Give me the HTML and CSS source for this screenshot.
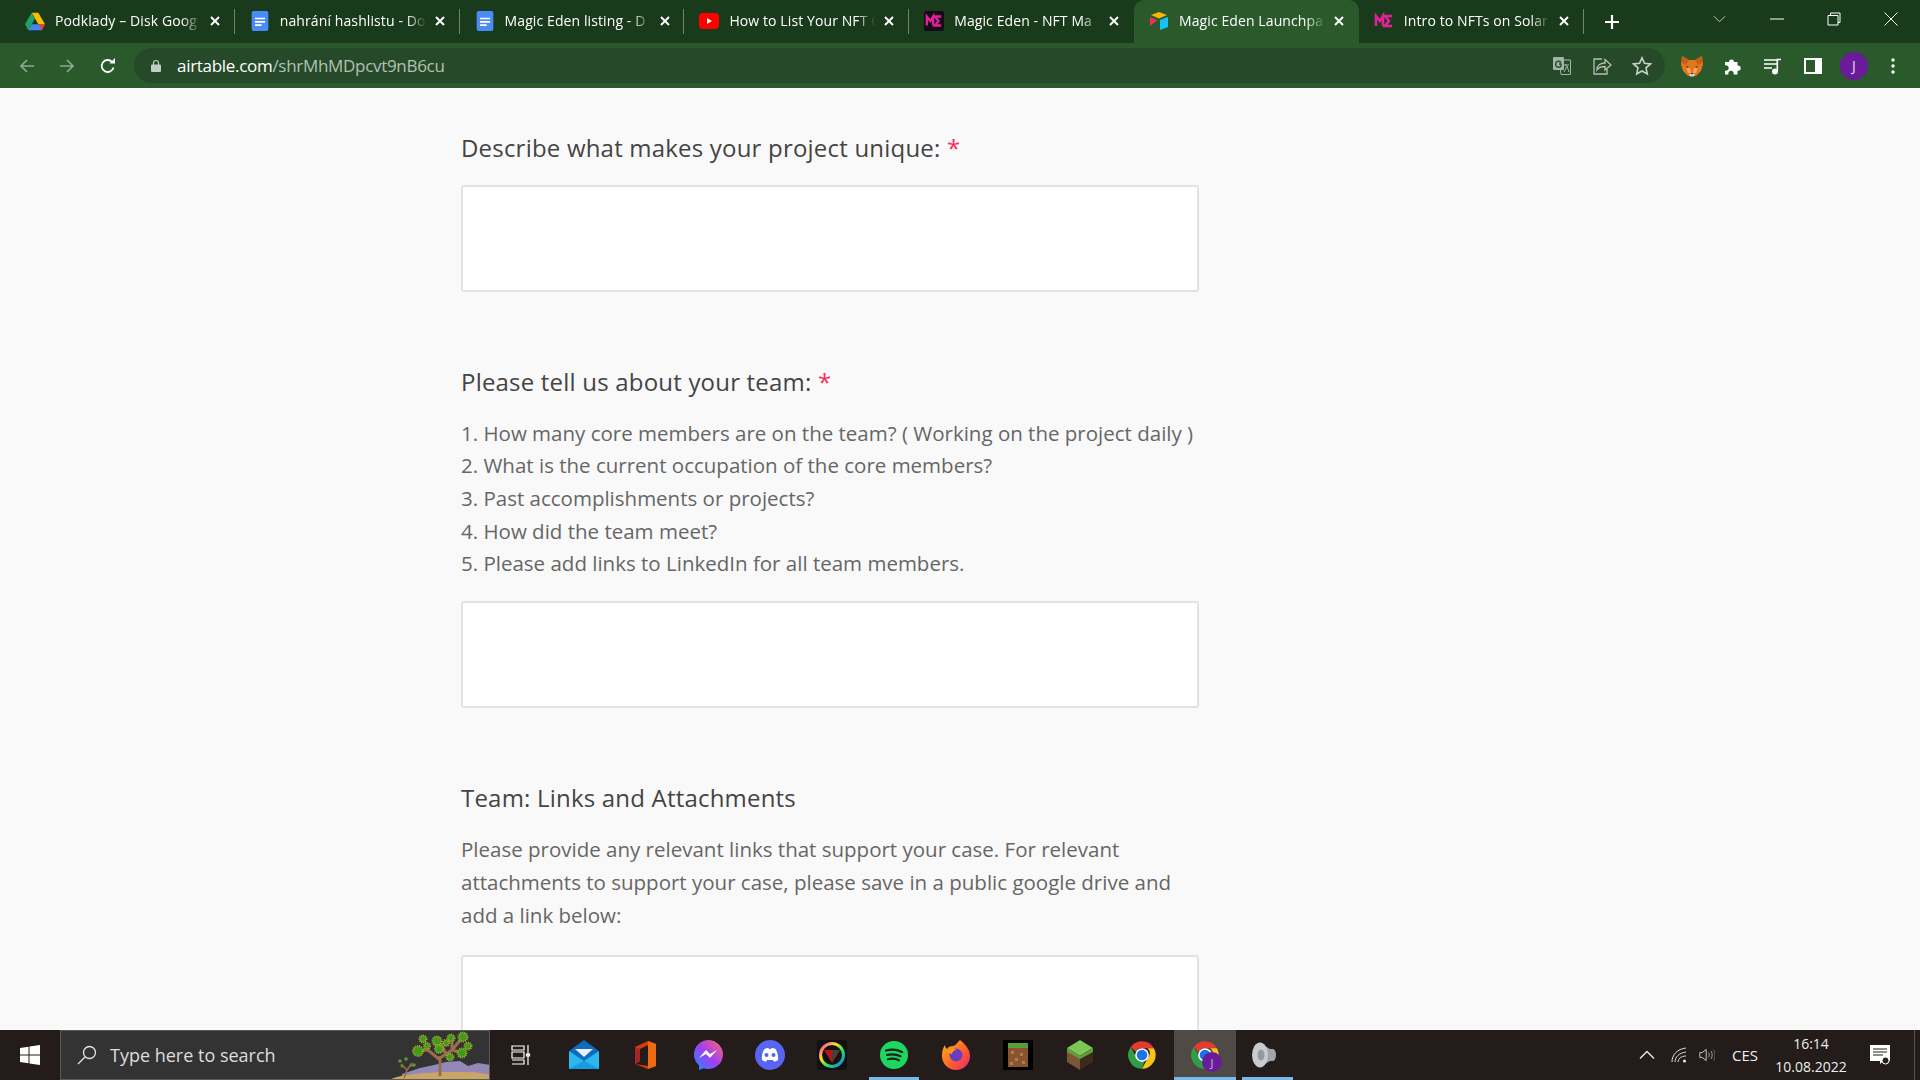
FILE: index.html

```html
<!DOCTYPE html>
<html lang="en">
<head>
    <meta charset="UTF-8">
    <title>Magic Eden Launchpad</title>
    <link rel="stylesheet" href="styles.css">
</head>
<body>
<svg class="defs" width="0" height="0">
    <symbol id="doc" viewBox="0 0 20 24">
        <rect width="20" height="24" rx="2.5" fill="#4b8bf5"/>
        <path d="M4 8h12v2H4zM4 12h12v2H4zM4 16h8v2H4z" fill="#fff"/>
    </symbol>
    <symbol id="me" viewBox="0 0 20 20">
        <path d="M2 15V5l4 5 3-5v10M18 5h-7l4 5-4 5h7" fill="none" stroke="#e0219a" stroke-width="2.6"/>
    </symbol>
    <symbol id="close" viewBox="0 0 10 10">
        <path d="M1 1l8 8M9 1l-8 8" stroke="#fff" stroke-width="1.9"/>
    </symbol>
    <symbol id="chrome" viewBox="0 0 48 48">
        <path d="M24 2a22 22 0 0 1 19 11H24a11 11 0 0 0-10 6L6 11A22 22 0 0 1 24 2z" fill="#e33b2e"/>
        <path d="M43 13a22 22 0 0 1-19 33l9-17a11 11 0 0 0 0-16z" fill="#fbc116"/>
        <path d="M24 46A22 22 0 0 1 6 11l9 16a11 11 0 0 0 13 7z" fill="#2f9e46"/>
        <circle cx="24" cy="24" r="11" fill="#fff"/>
        <circle cx="24" cy="24" r="8.5" fill="#1a73e8"/>
    </symbol>
</svg>

<div class="tabstrip">
    <div class="tab">
        <svg class="favicon" viewBox="0 0 24 22"><path d="M8 1h8l8 14h-8z" fill="#fbbc04"/><path d="M8 1l4 7-8 14-4-7z" fill="#1ea362"/><path d="M4 22l4-7h16l-4 7z" fill="#4285f4"/><path d="M16 15l4 7 4-7z" fill="#ea4335"/></svg>
        <span class="tab-title">Podklady – Disk Goog</span>
        <svg class="tab-close"><use href="#close"/></svg>
    </div>
    <div class="tab">
        <svg class="favicon"><use href="#doc"/></svg>
        <span class="tab-title">nahrání hashlistu - Do</span>
        <svg class="tab-close"><use href="#close"/></svg>
    </div>
    <div class="tab">
        <svg class="favicon"><use href="#doc"/></svg>
        <span class="tab-title">Magic Eden listing - D</span>
        <svg class="tab-close"><use href="#close"/></svg>
    </div>
    <div class="tab">
        <svg class="favicon" viewBox="0 0 20 20"><rect y="2" width="20" height="16" rx="4" fill="#f00"/><path d="M8 7l5 3-5 3z" fill="#fff"/></svg>
        <span class="tab-title">How to List Your NFT C</span>
        <svg class="tab-close"><use href="#close"/></svg>
    </div>
    <div class="tab no-sep">
        <span class="me-box"><svg><use href="#me"/></svg></span>
        <span class="tab-title">Magic Eden - NFT Ma</span>
        <svg class="tab-close"><use href="#close"/></svg>
    </div>
    <div class="tab active">
        <svg class="favicon" viewBox="0 0 20 20"><path d="M10 1l8 3-8 3.4L2 4z" fill="#fcb400"/><path d="M11 9l8-3v10l-8 3z" fill="#18bfff"/><path d="M1 6l7 3.6L1 15z" fill="#f82b60"/></svg>
        <span class="tab-title">Magic Eden Launchpa</span>
        <svg class="tab-close"><use href="#close"/></svg>
    </div>
    <div class="tab">
        <svg class="favicon"><use href="#me"/></svg>
        <span class="tab-title">Intro to NFTs on Solar</span>
        <svg class="tab-close"><use href="#close"/></svg>
    </div>
    <svg class="new-tab" viewBox="0 0 16 16"><path d="M8 1v14M1 8h14" stroke="#fff" stroke-width="2.2"/></svg>
    <div class="win-controls">
        <svg class="win-chevron" viewBox="0 0 14 8"><path d="M1 1l6 6 6-6" fill="none" stroke="#c6d2c6" stroke-width="1"/></svg>
        <svg class="win-btn" viewBox="0 0 14 14"><path d="M0 7h14" stroke="#fff" stroke-width="1"/></svg>
        <svg class="win-btn" viewBox="0 0 14 14"><path d="M3.5 3V1H13v9.5H11M1 3.5h10V13H1z" fill="none" stroke="#fff" stroke-width="1"/></svg>
        <svg class="win-btn" viewBox="0 0 14 14"><path d="M.5.5l13 13M13.5.5l-13 13" stroke="#fff" stroke-width="1"/></svg>
    </div>
</div>

<div class="toolbar">
    <svg class="nav-icon" viewBox="0 0 16 16"><path d="M15 8H2M8 2L2 8l6 6" fill="none" stroke="#8fa890" stroke-width="1.7"/></svg>
    <svg class="nav-icon" viewBox="0 0 16 16"><path d="M1 8h13M8 2l6 6-6 6" fill="none" stroke="#8fa890" stroke-width="1.7"/></svg>
    <svg class="nav-icon" viewBox="0 0 16 16"><path d="M13.5 9.5A6 6 0 1 1 12 3.8" fill="none" stroke="#fff" stroke-width="1.8"/><path d="M9.5 5.5H15V0z" fill="#fff"/></svg>
    <div class="omnibox">
        <svg class="lock" viewBox="0 0 10 13"><path d="M2.5 6V4a2.5 2.5 0 0 1 5 0v2" fill="none" stroke="#c2cdc2" stroke-width="1.2"/><rect y="5.5" width="10" height="7.5" rx="1" fill="#c2cdc2"/></svg>
        <span class="url">airtable.com<span class="url-path">/shrMhMDpcvt9nB6cu</span></span>
        <div class="omni-actions">
            <svg class="omni-icon" viewBox="0 0 20 20"><path d="M7 4h11.5v14.500H9z" fill="none" stroke="#a6b4a6" stroke-width="1"/><rect x="1" y="1" width="11" height="13" rx="1" fill="#a6b4a6"/><path d="M9 6.5A3 3 0 1 0 9 10V8H7" fill="none" stroke="#264a29" stroke-width="1.4"/><path d="M11 9h6M14 8v1.5M12 16l3-6 2 6" fill="none" stroke="#a6b4a6" stroke-width="1"/></svg>
            <svg class="omni-icon" viewBox="0 0 20 20"><path d="M10 3H2v15h13v-5" fill="none" stroke="#b4c0b4" stroke-width="1.3"/><path d="M5 14c0-5 4-7 8-7V3.5l6 5.500-6 5v-3.500c-3 0-6 .5-8 3.500z" fill="none" stroke="#b4c0b4" stroke-width="1.3"/></svg>
            <svg class="omni-icon" viewBox="0 0 20 20"><path d="M10 1.8l2.5 5.500 6 .6-4.500 4 1.300 6L10 15l-5.300 2.900 1.300-6-4.500-4 6-.6z" fill="none" stroke="#c8d2c8" stroke-width="1.6"/></svg>
        </div>
    </div>
    <div class="ext-icons">
        <svg class="ext-icon" viewBox="0 0 24 24"><path d="M2 2l7 4h6l7-4 1 8-2 7-5 5H8l-5-5-2-7z" fill="#e2761b"/><path d="M2 2l7 4-3 5-4-2zM22 2l-7 4 3 5 4-2z" fill="#c85f14"/><path d="M6 13l4 1 1 5H8zM18 13l-4 1-1 5h3z" fill="#f6a56a"/><path d="M6 12l3 1-2 1zM18 12l-3 1 2 1z" fill="#2c2018"/><path d="M9 20h6l-1 2.5h-4z" fill="#d9cfc5"/><path d="M11 19h2l-1 1.5z" fill="#2c2018"/></svg>
        <svg class="ext-icon" viewBox="0 0 20 20"><path d="M2 6h4a2.5 2.5 0 1 1 5 0h3.5v3.500a2.700 2.700 0 1 1 0 5.300V18.500H10.500a2.700 2.700 0 1 0-5 0H2v-4a2.700 2.700 0 1 0 0-5z" fill="#fff"/></svg>
        <svg class="ext-icon" viewBox="0 0 20 20"><path d="M1 4h13M1 8h13M1 12h8" stroke="#fff" stroke-width="1.6"/><circle cx="12" cy="15.5" r="3" fill="#fff"/><path d="M14.3 15.5V3.5H18" fill="none" stroke="#fff" stroke-width="1.6"/></svg>
        <svg class="ext-icon" viewBox="0 0 20 20"><path d="M1 2h18v16H1z" fill="#fff"/><path d="M3 4h9v12H3z" fill="#2a5a2c"/></svg>
        <span class="avatar">J</span>
        <svg class="ext-icon menu-dots" viewBox="0 0 4 16"><circle cx="2" cy="2" r="1.7" fill="#fff"/><circle cx="2" cy="8" r="1.7" fill="#fff"/><circle cx="2" cy="14" r="1.7" fill="#fff"/></svg>
    </div>
</div>

<main class="page">
    <div class="form">
        <div class="field first">
            <div class="field-label">Describe what makes your project unique: <span class="req">*</span></div>
            <div class="input-box"></div>
        </div>
        <div class="field">
            <div class="field-label">Please tell us about your team: <span class="req">*</span></div>
            <ol class="hint-list">
                <li>1. How many core members are on the team? ( Working on the project daily )</li>
                <li>2. What is the current occupation of the core members?</li>
                <li>3. Past accomplishments or projects?</li>
                <li>4. How did the team meet?</li>
                <li>5. Please add links to LinkedIn for all team members.</li>
            </ol>
            <div class="input-box"></div>
        </div>
        <div class="field">
            <div class="field-label">Team: Links and Attachments</div>
            <p class="hint">Please provide any relevant links that support your case. For relevant attachments to support your case, please save in a public google drive and add a link below:</p>
            <div class="input-box"></div>
        </div>
    </div>
</main>

<footer class="taskbar">
    <div class="start">
        <svg viewBox="0 0 20 20" width="20" height="20"><path d="M0 3l8.5-1.200v7.700H0zM9.500 1.600L20 0v9.500H9.500zM0 10.500h8.500v7.700L0 17zM9.500 10.500H20V20L9.500 18.400z" fill="#fff"/></svg>
    </div>
    <div class="search">
        <svg class="search-icon" viewBox="0 0 20 20"><circle cx="12.5" cy="7.5" r="6" fill="none" stroke="#e4e4e4" stroke-width="1.3"/><path d="M8 12l-7 7" stroke="#e4e4e4" stroke-width="1.3"/></svg>
        <span class="search-text">Type here to search</span>
        <svg class="search-art" viewBox="0 0 100 50">
            <path d="M12 44l18-6 14-3 12-3 14-1 8 5 10-3 12 2v15H12z" fill="#9388b8"/>
            <path d="M0 50c4-5 40-8 60-8s30 0 40 3v5z" fill="#c9a566"/>
            <path d="M50 46V26M50 30L38 20 28 21M38 20l-1-6M50 28l12-8 10-12M62 20l10 3M56 24l-4-8-5-5M62 20V9" fill="none" stroke="#9a6e4c" stroke-width="3"/>
            <path d="M14 48l3-8 5-7M17 40l-6-6M20 36l5-1" fill="none" stroke="#9a6e4c" stroke-width="1.5"/>
            <g fill="#3f9a1f" stroke="#a8b02a" stroke-width="2" stroke-dasharray="1 1">
                <circle cx="33" cy="9" r="3.5"/><circle cx="47" cy="11" r="4.5"/><circle cx="61" cy="8" r="3.5"/><circle cx="73" cy="7" r="4.5"/><circle cx="78" cy="16" r="3.5"/><circle cx="56" cy="13" r="3"/><circle cx="37" cy="16" r="3"/><circle cx="28" cy="21" r="5"/><circle cx="49" cy="19" r="4"/><circle cx="72" cy="23" r="4.5"/><circle cx="60" cy="27" r="3.5"/>
            </g>
            <g fill="#5c9a2e">
                <circle cx="10" cy="31" r="1.8"/><circle cx="16" cy="29" r="1.8"/><circle cx="24" cy="35" r="1.8"/><circle cx="12" cy="36" r="1.5"/>
            </g>
        </svg>
    </div>
    <div class="apps">
        <div class="app task-view"><svg class="app-icon" viewBox="0 0 22 20"><path d="M1 1h12v4H1zM1 15h12v4H1M1 7h12v6H1zM17 0v20M15.5 9h3v2h-3z" fill="none" stroke="#fff" stroke-width="1.2"/></svg></div>
        <div class="app"><svg class="app-icon" viewBox="0 0 30 30"><path d="M0 11L15 0l15 11v18H0z" fill="#0f6cbd"/><path d="M6 9h18l-9 8z" fill="#e8eef5"/><path d="M0 11l15 10 15-10v18H0z" fill="#2bb7f0"/><path d="M0 29l15-8 15 8z" fill="#1a9ae0"/></svg></div>
        <div class="app"><svg class="app-icon" viewBox="0 0 30 30"><path d="M4 7l13-6 8 3v22l-8 3L4 24l13 2V5L9 9v12l-5 3z" fill="#d83b01"/><path d="M17 1l8 3v22l-8 3z" fill="#eb6a12"/><path d="M4 7l5 2v12l-5 3z" fill="#a4262c"/></svg></div>
        <div class="app"><svg class="app-icon" viewBox="0 0 30 30"><defs><linearGradient id="msgr" x1="0" y1="1" x2="1" y2="0"><stop offset="0" stop-color="#1f8cff"/><stop offset=".5" stop-color="#a33df5"/><stop offset="1" stop-color="#ff6a6a"/></linearGradient></defs><path d="M15 0a15 14.5 0 0 1 0 29c-2 0-3-.3-4-.7L6 30v-4.5A14.5 14.5 0 0 1 15 0z" fill="url(#msgr)"/><path d="M6 18l7-8 4 4 7-4-7 8-4-4z" fill="#fff"/></svg></div>
        <div class="app"><svg class="app-icon" viewBox="0 0 30 30"><circle cx="15" cy="15" r="15" fill="#5865f2"/><path d="M7 20c-.5-4 .5-8 2.500-11 1.500-.7 3-1 4-1l.5 1h2l.5-1c1 0 2.500.3 4 1 2 3 3 7 2.500 11-1.500 1-3 1.500-4 1.700l-1-1.700H12l-1 1.700c-1-.2-2.500-.7-4-1.700z" fill="#fff"/><circle cx="11.5" cy="15" r="2" fill="#5865f2"/><circle cx="18.5" cy="15" r="2" fill="#5865f2"/></svg></div>
        <div class="app"><svg class="app-icon" viewBox="0 0 30 30"><defs><linearGradient id="rgb" x1="0" y1="0" x2="1" y2="1"><stop offset="0" stop-color="#ff2bd0"/><stop offset=".35" stop-color="#ffe014"/><stop offset=".65" stop-color="#18e06a"/><stop offset="1" stop-color="#2a6bff"/></linearGradient></defs><rect width="30" height="30" rx="3" fill="#111"/><circle cx="15" cy="15" r="11.5" fill="none" stroke="url(#rgb)" stroke-width="3"/><path d="M7 10h16l-8 13z" fill="#b3161c"/><path d="M15 10h8l-8 13z" fill="#4d3a3a"/></svg></div>
        <div class="app has-bar"><svg class="app-icon" viewBox="0 0 30 30"><circle cx="15" cy="15" r="14" fill="#1ed760"/><path d="M7 10.5c6-1.500 11-1 16 1.500M8 15c5-1.200 9-.8 13.500 1.300M9 19.300c4-1 8-.6 11 1" fill="none" stroke="#16241a" stroke-width="2.2" stroke-linecap="round"/></svg></div>
        <div class="app"><svg class="app-icon" viewBox="0 0 30 30"><defs><linearGradient id="ff" x1="0" y1="0" x2="1" y2="1"><stop offset="0" stop-color="#ffb81a"/><stop offset=".6" stop-color="#ff5a2a"/><stop offset="1" stop-color="#e0218a"/></linearGradient></defs><path d="M19 0c5 4 10 9 10 16a14 14 0 0 1-28 0C1 11 2 8 4 5c0 2 1 3 2 4 1-2 3-3 6-3 2 0 4-3 7-6z" fill="url(#ff)"/><circle cx="15" cy="15" r="6.5" fill="#6b3bc0"/><path d="M5 12c3-3 8-4 11-2-3 0-5 2-5 4z" fill="#ff9a1a"/></svg></div>
        <div class="app"><span class="mc-box"><svg viewBox="0 0 20 24" width="20" height="24"><rect width="20" height="24" fill="#8a5330"/><rect width="20" height="5" fill="#5a9c3a"/><path d="M3 8h3v3H3zM12 10h3v3h-3zM7 15h3v3H7zM14 18h3v3h-3zM2 19h3v3H2z" fill="#b17a4c"/></svg></span></div>
        <div class="app"><svg class="app-icon" viewBox="0 0 30 30"><path d="M15 0l13 8-13 8L2 8z" fill="#7dc855"/><path d="M2 8l13 8v14L2 22z" fill="#7a5638"/><path d="M28 8L15 16v14l13-8z" fill="#3c2a1c"/><path d="M2 8l13 8v3L2 12zM28 8l-13 8v3l13-7z" fill="#5f9e3c"/></svg></div>
        <div class="app"><svg class="chrome-big"><use href="#chrome"/></svg></div>
        <div class="app active has-bar">
            <svg class="chrome-big"><use href="#chrome"/></svg>
            <span class="chrome-badge">J</span>
        </div>
        <div class="app has-bar narrow"><svg class="app-icon" viewBox="0 0 30 30"><path d="M10 3L20 9h3a3 6 0 0 1 0 12h-3L10 27z" fill="#a2a6ac"/><ellipse cx="10" cy="15" rx="8" ry="12.5" fill="#c8cbd0"/><ellipse cx="11" cy="15" rx="3.5" ry="5.5" fill="#96999f"/></svg></div>
    </div>
    <div class="tray">
        <svg class="tray-icon caret" viewBox="0 0 16 10"><path d="M1 8.5l7-7 7 7" fill="none" stroke="#eee" stroke-width="1.3"/></svg>
        <svg class="tray-icon wifi" viewBox="0 0 16 16"><path d="M1 15C1 8 6 2 15 1M4 15c0-5 4-9 11-10M7 15c0-3 3-6 8-6" fill="none" stroke="#ddd" stroke-width="1"/><circle cx="13.5" cy="14" r="1.5" fill="#eee"/></svg>
        <svg class="tray-icon" viewBox="0 0 20 18"><path d="M1 6h3l5-4v14l-5-4H1z" fill="none" stroke="#eee" stroke-width="1"/><path d="M12 6c1 2 1 4 0 6M15 4c2 3 2 7 0 10" fill="none" stroke="#bbb" stroke-width="1"/><path d="M18 2c2.5 4 2.5 10 0 14" fill="none" stroke="#777" stroke-width="1"/></svg>
        <span class="lang">CES</span>
        <div class="clock">
            <div>16:14</div>
            <div>10.08.2022</div>
        </div>
        <svg class="notify" viewBox="0 0 20 20"><path d="M0 0h20v16h-7l-3 3v-3H0z" fill="#fff"/><path d="M3 4h14M3 7h14M3 10h10" stroke="#231c1a" stroke-width="1"/><circle cx="15.5" cy="15.5" r="3.5" fill="#231c1a" stroke="#fff"/></svg>
        <span class="show-desktop"></span>
    </div>
</footer>
</body>
</html>
```

FILE: styles.css

```css
* {
    box-sizing: border-box;
}

html, body {
    height: 100%;
}

body {
    margin: 0;
    display: flex;
    flex-direction: column;
    height: 1080px;
    overflow: hidden;
    font-family: "Open Sans", "Noto Sans", sans-serif;
    background-color: #f9f9f9;
}

.defs {
    position: absolute;
}

/* tabs */
.tabstrip {
    display: flex;
    align-items: center;
    height: 43px;
    padding-left: 10px;
    background-color: #1a3a1c;
    color: white;
}

.tab {
    position: relative;
    display: flex;
    align-items: center;
    flex: 0 0 224.8px;
    height: 43px;
    padding-left: 15px;
    padding-bottom: 2px;
    font-size: 14px;
    letter-spacing: 0.1px;
}

.tab::after {
    content: "";
    position: absolute;
    right: 0;
    top: 9px;
    width: 1px;
    height: 25px;
    background-color: #6f8570;
}

.tab.no-sep::after, .tab.active::after {
    display: none;
}

.tab.active {
    background-color: #2a5a2c;
    border-radius: 10px 10px 0 0;
}

.favicon {
    flex: 0 0 20px;
    width: 20px;
    height: 20px;
    margin-right: 10px;
}

.me-box {
    display: flex;
    align-items: center;
    justify-content: center;
    flex: 0 0 20px;
    width: 20px;
    height: 20px;
    margin-right: 10px;
    background-color: #140a18;
    border-radius: 2px;
}

.me-box svg {
    width: 18px;
    height: 18px;
}

.tab-title {
    flex: 0 0 151px;
    width: 151px;
    overflow: hidden;
    white-space: nowrap;
    -webkit-mask-image: linear-gradient(to right, black 84%, transparent 97%);
    mask-image: linear-gradient(to right, black 84%, transparent 97%);
}

.tab-close {
    width: 10px;
    height: 10px;
    margin-left: 4px;
}

.new-tab {
    width: 16px;
    height: 16px;
    margin-left: 20px;
}

.win-controls {
    display: flex;
    align-items: center;
    margin-left: auto;
    padding-bottom: 5px;
}

.win-chevron {
    width: 13px;
    height: 8px;
    margin-right: 44px;
}

.win-btn {
    width: 14px;
    height: 14px;
    margin-right: 43px;
}

.win-btn:last-child {
    margin-right: 22px;
}

/* toolbar */
.toolbar {
    display: flex;
    align-items: center;
    height: 45px;
    padding-left: 19px;
    background-color: #2a5a2c;
}

.nav-icon {
    width: 16px;
    height: 16px;
    margin-right: 24px;
}

.nav-icon:nth-child(2) {
    margin-right: 25px;
}

.nav-icon:nth-child(3) {
    margin-right: 18px;
}

.omnibox {
    display: flex;
    align-items: center;
    width: 1531px;
    height: 35px;
    padding-left: 17px;
    background-color: #264a29;
    border-radius: 18px;
}

.lock {
    width: 10px;
    height: 13px;
    margin-right: 16px;
}

.url {
    font-size: 17px;
    letter-spacing: -0.3px;
    color: white;
}

.url-path {
    color: #b3c0b3;
}

.omni-actions {
    display: flex;
    align-items: center;
    gap: 20px;
    margin-left: auto;
    padding-right: 13px;
}

.omni-icon {
    width: 20px;
    height: 20px;
}

.ext-icons {
    display: flex;
    align-items: center;
    margin-left: 15px;
}

.ext-icon {
    width: 20px;
    height: 20px;
    margin-right: 20px;
}

.ext-icon:first-child {
    width: 24px;
    height: 24px;
    margin-right: 19px;
}

.avatar {
    display: flex;
    align-items: center;
    justify-content: center;
    width: 28px;
    height: 28px;
    margin-left: -3px;
    margin-right: 23px;
    border-radius: 50%;
    background-color: #6a1b9a;
    color: #e6d8ee;
    font-size: 14px;
}

.menu-dots {
    width: 4px;
    height: 16px;
    margin: 0;
}

/* form */
.page {
    flex: 1;
    overflow: hidden;
    padding-left: 461px;
}

.form {
    width: 738px;
}

.field {
    margin-bottom: 71.5px;
}

.field.first {
    padding-top: 42px;
}

.field.first .field-label {
    margin-bottom: 19px;
}

.field-label {
    font-size: 24px;
    letter-spacing: 0.2px;
    line-height: 36px;
    color: #444;
    margin-bottom: 18px;
}

.req {
    color: #f82b60;
}

.hint-list {
    list-style: none;
    margin: -1px 0 21px;
    padding: 0;
    font-size: 20.5px;
    line-height: 32.7px;
    color: #666;
}

.hint {
    margin: -1px 0 23px;
    font-size: 20.5px;
    line-height: 33px;
    color: #666;
}

.input-box {
    height: 107px;
    background-color: white;
    border: 2px solid #e3e3e3;
    border-radius: 3px;
}

/* taskbar */
.taskbar {
    display: flex;
    align-items: stretch;
    height: 50px;
    background-color: #231c1a;
    color: white;
}

.start {
    display: flex;
    align-items: center;
    justify-content: center;
    width: 60px;
}

.search {
    display: flex;
    align-items: center;
    width: 430px;
    padding-left: 16px;
    background-color: #333;
    border: 1px solid #5a5a5a;
    overflow: hidden;
}

.search-icon {
    width: 20px;
    height: 20px;
}

.search-text {
    margin-left: 13px;
    font-size: 18px;
    color: #ddd;
}

.search-art {
    width: 100px;
    height: 50px;
    margin-left: auto;
    margin-right: -1px;
}

.apps {
    display: flex;
}

.app {
    position: relative;
    display: flex;
    align-items: center;
    justify-content: center;
    width: 62px;
}

.app.task-view {
    width: 63px;
}

.app.active {
    margin-left: 1px;
    background-color: #504a46;
}

.app.narrow {
    width: 51px;
    margin-left: 6px;
    padding-right: 6px;
}

.app.has-bar::after {
    content: "";
    position: absolute;
    left: 6px;
    right: 6px;
    bottom: 0;
    height: 3px;
    background-color: #76b9ed;
}

.app.active::after, .app.narrow::after {
    left: 0;
    right: 0;
}

.app-icon {
    flex: none;
    width: 30px;
    height: 30px;
}

.task-view .app-icon {
    width: 22px;
    height: 20px;
}

.mc-box {
    display: flex;
    align-items: center;
    justify-content: center;
    width: 30px;
    height: 30px;
    background-color: black;
}

.chrome-big {
    width: 30px;
    height: 30px;
}

.chrome-badge {
    position: absolute;
    left: 28px;
    top: 22px;
    display: flex;
    align-items: center;
    justify-content: center;
    width: 20px;
    height: 20px;
    border-radius: 50%;
    background-color: #6a1b9a;
    color: #cbb3d8;
    font-size: 11px;
}

.tray {
    display: flex;
    align-items: center;
    margin-left: auto;
}

.tray-icon {
    width: 16px;
    height: 16px;
    margin-right: 14px;
}

.tray-icon.caret {
    margin-right: 16px;
}

.tray-icon.wifi {
    margin-right: 12px;
}

.lang {
    margin-left: 3px;
    font-size: 15px;
    color: #eee;
}

.clock {
    width: 90px;
    margin-left: 8px;
    font-size: 14px;
    line-height: 23px;
    text-align: center;
    color: #eee;
}

.notify {
    width: 20px;
    height: 20px;
    margin-left: 14px;
    margin-right: 24px;
}

.show-desktop {
    width: 1px;
    height: 100%;
    margin-right: 5px;
    background-color: #5a5552;
}
```
